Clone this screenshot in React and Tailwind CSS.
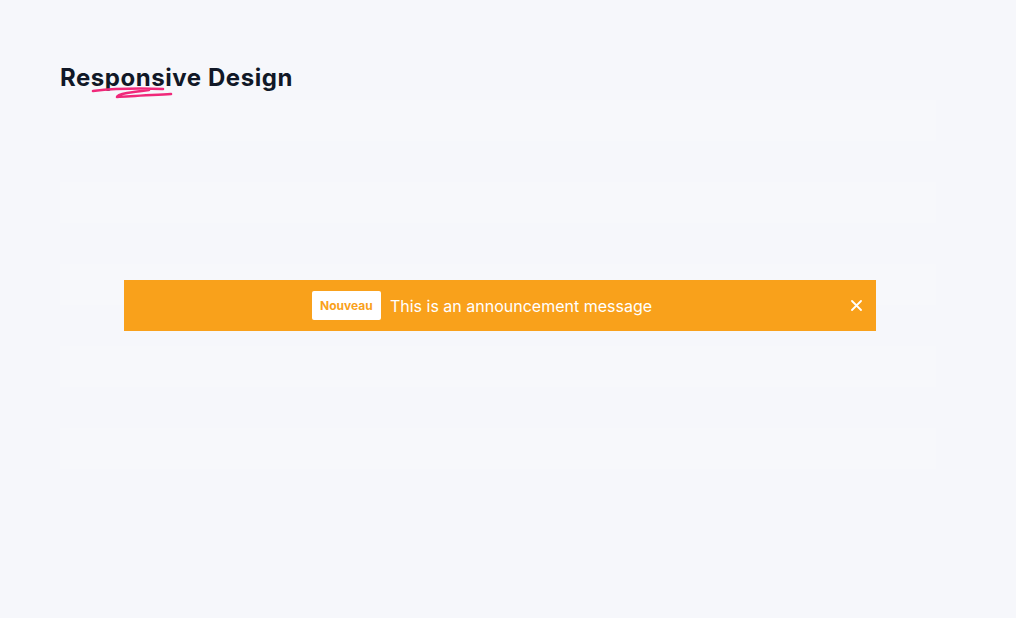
const rows = Array.from({ length: 10 });

function Squiggle() {
  return (
    <svg
      className="absolute left-[31px] top-[24px] pointer-events-none"
      width="82"
      height="14"
      viewBox="0 0 82 14"
      fill="none"
    >
      <path
        d="M2 5 C 20 3, 45 2, 72 3 M 58 4 C 42 6, 26 8, 26 11 C 40 10, 62 9, 80 8"
        stroke="#f0287a"
        strokeWidth="2.6"
        strokeLinecap="round"
        strokeLinejoin="round"
      />
    </svg>
  );
}

function Announcement() {
  return (
    <div className="flex items-stretch bg-[#f9a11b] h-[51px] w-[752px] ml-[64px]">
      <div className="flex-1 flex items-center justify-center gap-[9px] pl-[4px]">
        <span className="bg-white rounded-[2px] h-[29px] w-[69px] flex items-center justify-center text-[12px] font-bold text-[#f9a11b]">
          Nouveau
        </span>
        <span className="text-white text-[16px]">This is an announcement message</span>
      </div>
      <button className="w-[40px] flex items-center justify-start pl-[15px] text-white">
        <svg width="11" height="11" viewBox="0 0 11 11">
          <path d="M1 1 L10 10 M10 1 L1 10" stroke="white" strokeWidth="1.8" strokeLinecap="round" />
        </svg>
      </button>
    </div>
  );
}

export default function App() {
  return (
    <div className="min-h-screen bg-[#f6f7fb] font-['Inter',sans-serif] pt-[62px] px-[60px]">
      <h1 className="relative inline-block text-[24px] leading-[32px] font-bold text-[#111827] tracking-[0.55px]">
        Responsive Design
        <Squiggle />
      </h1>
      <div className="relative mt-[6px] w-[876px] h-[410px]">
        <div className="flex flex-col">
          {rows.map((_, i) => (
            <div key={i} className={i % 2 ? "h-[41px] bg-[#f6f7fb]" : "h-[41px] bg-[#f7f8fb]"} />
          ))}
        </div>
        <div className="absolute inset-x-0 top-[180px]">
          <Announcement />
        </div>
      </div>
    </div>
  );
}
